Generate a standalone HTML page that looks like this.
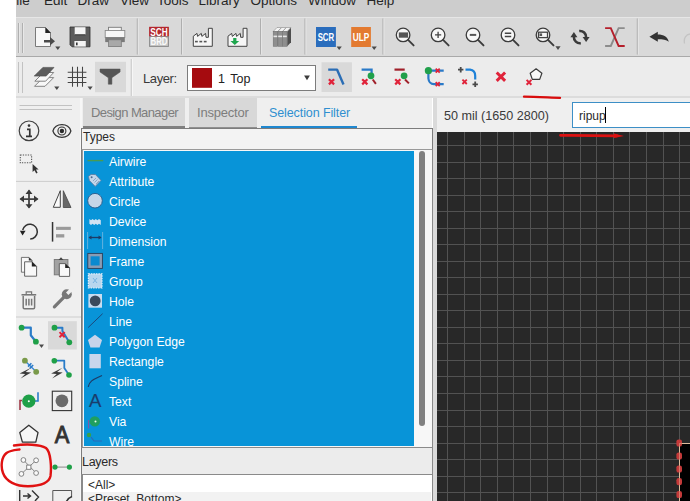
<!DOCTYPE html>
<html><head><meta charset="utf-8">
<style>
html,body{margin:0;padding:0;}
body{width:690px;height:501px;overflow:hidden;position:relative;background:#fff;font-family:"Liberation Sans",sans-serif;}
.a{position:absolute;}
.t{position:absolute;white-space:pre;line-height:1;}
svg{position:absolute;overflow:visible;}
</style></head><body>

<div class="a" style="left:16px;top:0;width:674px;height:17px;background:#cdcdcd;overflow:hidden">
<div class="t" style="left:-8px;top:-5.8px;font-size:13.5px;color:#262626">File</div>
<div class="t" style="left:28px;top:-5.8px;font-size:13.5px;color:#262626">Edit</div>
<div class="t" style="left:61.5px;top:-5.8px;font-size:13.5px;color:#262626">Draw</div>
<div class="t" style="left:104px;top:-5.8px;font-size:13.5px;color:#262626">View</div>
<div class="t" style="left:141px;top:-5.8px;font-size:13.5px;color:#262626">Tools</div>
<div class="t" style="left:182.5px;top:-5.8px;font-size:13.5px;color:#262626">Library</div>
<div class="t" style="left:234.5px;top:-5.8px;font-size:13.5px;color:#262626">Options</div>
<div class="t" style="left:292px;top:-5.8px;font-size:13.5px;color:#262626">Window</div>
<div class="t" style="left:350.5px;top:-5.8px;font-size:13.5px;color:#262626">Help</div>
</div>
<div class="a" style="left:16px;top:17px;width:674px;height:40px;background:#d9d9d9;border-top:1px solid #e6e6e6;box-sizing:border-box;border-bottom:1px solid #a9a9a9"></div>
<div class="a" style="left:16px;top:57px;width:674px;height:41px;background:#ececec;border-bottom:2px solid #dcdcdc;box-sizing:border-box"></div>
<div class="a" style="left:16px;top:98px;width:64px;height:403px;background:#efefef"></div>
<div class="a" style="left:80px;top:98px;width:2px;height:403px;background:#f7f7f7"></div>
<div class="a" style="left:82px;top:98px;width:350px;height:403px;background:#efefef"></div>
<div class="a" style="left:433px;top:98px;width:4px;height:403px;background:#dadada"></div>
<div class="a" style="left:437px;top:98px;width:253px;height:34px;background:#efefef"></div>
<div class="a" style="left:83px;top:98px;width:102px;height:28px;background:#d8d8d8"></div>
<div class="a" style="left:83px;top:126px;width:102px;height:2px;background:#808080"></div>
<div class="t" style="left:91px;top:106px;font-size:13px;color:#7d7d7d;letter-spacing:-0.6px">Design Manager</div>
<div class="a" style="left:189px;top:98px;width:68px;height:29px;background:#d8d8d8"></div>
<div class="a" style="left:189px;top:127px;width:68px;height:1px;background:#8f8f8f"></div>
<div class="t" style="left:197px;top:106px;font-size:13px;color:#7d7d7d;letter-spacing:-0.2px">Inspector</div>
<div class="t" style="left:269px;top:107px;font-size:12.5px;color:#2f8fd0;letter-spacing:-0.1px">Selection Filter</div>
<div class="a" style="left:261px;top:125.6px;width:96px;height:2.6px;background:#1f88d0"></div>
<div class="a" style="left:81px;top:128px;width:352px;height:22px;background:#f3f3f3;border:1px solid #7c7c7c;border-bottom-color:#999;box-sizing:border-box"></div>
<div class="t" style="left:83px;top:131px;font-size:12px;color:#2a2a2a">Types</div>
<div class="a" style="left:81px;top:150px;width:352px;height:298px;background:#f7f7f7;border-left:1px solid #7c7c7c;border-right:1px solid #8a8a8a;box-sizing:border-box"></div>
<div class="a" style="left:82px;top:150px;width:1px;height:297px;background:#9c9c9c"></div><div class="a" style="left:83px;top:150px;width:1px;height:297px;background:#eef6fc"></div>
<div class="a" style="left:84px;top:151px;width:330px;height:295px;background:#0894d8"></div>
<div class="a" style="left:419px;top:151px;width:6px;height:275px;background:#808080;border-radius:3px"></div>
<div class="a" style="left:81px;top:447px;width:352px;height:1px;background:#8a8a8a"></div>
<div class="a" style="left:84px;top:151px;width:330px;height:295px;overflow:hidden">
<div class="t" style="left:25px;top:4.800000000000001px;font-size:12.2px;color:#fff">Airwire</div>
<div class="t" style="left:25px;top:24.8px;font-size:12.2px;color:#fff">Attribute</div>
<div class="t" style="left:25px;top:44.8px;font-size:12.2px;color:#fff">Circle</div>
<div class="t" style="left:25px;top:64.8px;font-size:12.2px;color:#fff">Device</div>
<div class="t" style="left:25px;top:84.8px;font-size:12.2px;color:#fff">Dimension</div>
<div class="t" style="left:25px;top:104.8px;font-size:12.2px;color:#fff">Frame</div>
<div class="t" style="left:25px;top:124.8px;font-size:12.2px;color:#fff">Group</div>
<div class="t" style="left:25px;top:144.8px;font-size:12.2px;color:#fff">Hole</div>
<div class="t" style="left:25px;top:164.8px;font-size:12.2px;color:#fff">Line</div>
<div class="t" style="left:25px;top:184.8px;font-size:12.2px;color:#fff">Polygon Edge</div>
<div class="t" style="left:25px;top:204.8px;font-size:12.2px;color:#fff">Rectangle</div>
<div class="t" style="left:25px;top:224.8px;font-size:12.2px;color:#fff">Spline</div>
<div class="t" style="left:25px;top:244.8px;font-size:12.2px;color:#fff">Text</div>
<div class="t" style="left:25px;top:264.8px;font-size:12.2px;color:#fff">Via</div>
<div class="t" style="left:25px;top:284.8px;font-size:12.2px;color:#fff">Wire</div>
</div>
<div class="a" style="left:81px;top:448px;width:352px;height:26px;background:#ececec;border-left:1px solid #7c7c7c;border-right:1px solid #8a8a8a;box-sizing:border-box"></div>
<div class="t" style="left:82px;top:456px;font-size:12.5px;color:#2a2a2a;letter-spacing:-0.3px">Layers</div>
<div class="a" style="left:81px;top:474px;width:352px;height:1px;background:#8a8a8a"></div>
<div class="a" style="left:81px;top:475px;width:352px;height:26px;background:#fff;border-left:2px solid #8a8a8a;border-right:1px solid #8a8a8a;box-sizing:border-box"></div>
<div class="t" style="left:88px;top:479px;font-size:12px;color:#2a2a2a">&lt;All&gt;</div>
<div class="a" style="left:83px;top:492px;width:348px;height:9px;background:#f2f2f2"></div>
<div class="t" style="left:88px;top:493px;font-size:12px;color:#2a2a2a">&lt;Preset_Bottom&gt;</div>
<div class="t" style="left:444px;top:110px;font-size:12.6px;color:#3a3a3a">50 mil (1650 2800)</div>
<div class="a" style="left:572px;top:102px;width:130px;height:26px;background:#fff;border:1px solid #3d8fc6;box-sizing:border-box"></div>
<div class="t" style="left:579px;top:110px;font-size:12px;color:#2a2a2a">ripup</div>
<div class="a" style="left:605px;top:107px;width:1px;height:16px;background:#000"></div>
<div class="a" style="left:437px;top:132px;width:253px;height:369px;background:#282828;overflow:hidden">
<svg width="253" height="369" style="left:0;top:0"><line x1="10.5" y1="0" x2="10.5" y2="369" stroke="#525252" stroke-width="1"/><line x1="27.5" y1="0" x2="27.5" y2="369" stroke="#525252" stroke-width="1"/><line x1="43.5" y1="0" x2="43.5" y2="369" stroke="#525252" stroke-width="1"/><line x1="60.5" y1="0" x2="60.5" y2="369" stroke="#525252" stroke-width="1"/><line x1="76.5" y1="0" x2="76.5" y2="369" stroke="#525252" stroke-width="1"/><line x1="93.5" y1="0" x2="93.5" y2="369" stroke="#525252" stroke-width="1"/><line x1="110.5" y1="0" x2="110.5" y2="369" stroke="#525252" stroke-width="1"/><line x1="126.5" y1="0" x2="126.5" y2="369" stroke="#525252" stroke-width="1"/><line x1="143.5" y1="0" x2="143.5" y2="369" stroke="#525252" stroke-width="1"/><line x1="159.5" y1="0" x2="159.5" y2="369" stroke="#525252" stroke-width="1"/><line x1="176.5" y1="0" x2="176.5" y2="369" stroke="#525252" stroke-width="1"/><line x1="192.5" y1="0" x2="192.5" y2="369" stroke="#525252" stroke-width="1"/><line x1="209.5" y1="0" x2="209.5" y2="369" stroke="#525252" stroke-width="1"/><line x1="226.5" y1="0" x2="226.5" y2="369" stroke="#525252" stroke-width="1"/><line x1="242.5" y1="0" x2="242.5" y2="369" stroke="#525252" stroke-width="1"/><line x1="0" y1="13.5" x2="253" y2="13.5" stroke="#525252" stroke-width="1"/><line x1="0" y1="30.5" x2="253" y2="30.5" stroke="#525252" stroke-width="1"/><line x1="0" y1="46.5" x2="253" y2="46.5" stroke="#525252" stroke-width="1"/><line x1="0" y1="63.5" x2="253" y2="63.5" stroke="#525252" stroke-width="1"/><line x1="0" y1="79.5" x2="253" y2="79.5" stroke="#525252" stroke-width="1"/><line x1="0" y1="96.5" x2="253" y2="96.5" stroke="#525252" stroke-width="1"/><line x1="0" y1="112.5" x2="253" y2="112.5" stroke="#525252" stroke-width="1"/><line x1="0" y1="129.5" x2="253" y2="129.5" stroke="#525252" stroke-width="1"/><line x1="0" y1="145.5" x2="253" y2="145.5" stroke="#525252" stroke-width="1"/><line x1="0" y1="162.5" x2="253" y2="162.5" stroke="#525252" stroke-width="1"/><line x1="0" y1="178.5" x2="253" y2="178.5" stroke="#525252" stroke-width="1"/><line x1="0" y1="195.5" x2="253" y2="195.5" stroke="#525252" stroke-width="1"/><line x1="0" y1="211.5" x2="253" y2="211.5" stroke="#525252" stroke-width="1"/><line x1="0" y1="228.5" x2="253" y2="228.5" stroke="#525252" stroke-width="1"/><line x1="0" y1="244.5" x2="253" y2="244.5" stroke="#525252" stroke-width="1"/><line x1="0" y1="261.5" x2="253" y2="261.5" stroke="#525252" stroke-width="1"/><line x1="0" y1="278.5" x2="253" y2="278.5" stroke="#525252" stroke-width="1"/><line x1="0" y1="294.5" x2="253" y2="294.5" stroke="#525252" stroke-width="1"/><line x1="0" y1="311.5" x2="253" y2="311.5" stroke="#525252" stroke-width="1"/><line x1="0" y1="327.5" x2="253" y2="327.5" stroke="#525252" stroke-width="1"/><line x1="0" y1="344.5" x2="253" y2="344.5" stroke="#525252" stroke-width="1"/><line x1="0" y1="360.5" x2="253" y2="360.5" stroke="#525252" stroke-width="1"/><rect x="242" y="311" width="11" height="58" fill="#000"/><path d="M242.5,369 V311.5 H253" fill="none" stroke="#d8b898" stroke-width="1"/><rect x="239.4" y="307.4" width="5.6" height="7.2" rx="2.2" fill="#c43a3a"/><rect x="239.4" y="320.4" width="5.6" height="7.2" rx="2.2" fill="#c43a3a"/><rect x="239.4" y="333.4" width="5.6" height="7.2" rx="2.2" fill="#c43a3a"/><rect x="239.4" y="346.09999999999997" width="5.6" height="7.2" rx="2.2" fill="#c43a3a"/><rect x="239.4" y="358.9" width="5.6" height="7.2" rx="2.2" fill="#c43a3a"/><path d="M242.5,369 V311.5 H253" fill="none" stroke="#e8c0a0" stroke-width="0.6" opacity="0.8"/></svg>
</div>
<svg width="690" height="501" style="left:0;top:0"><rect x="18" y="23" width="1" height="30" fill="#b0b0b0"/><rect x="22" y="23" width="1" height="30" fill="#b0b0b0"/><rect x="19" y="23" width="1" height="30" fill="#e8e8e8"/><rect x="23" y="23" width="1" height="30" fill="#e8e8e8"/><rect x="18" y="62" width="1" height="31" fill="#c2c2c2"/><rect x="22" y="62" width="1" height="31" fill="#c2c2c2"/><rect x="136.8" y="18.5" width="1" height="36" fill="#a9a9a9"/><rect x="137.8" y="18.5" width="1" height="36" fill="#e6e6e6"/><rect x="181.1" y="18.5" width="1" height="36" fill="#a9a9a9"/><rect x="182.1" y="18.5" width="1" height="36" fill="#e6e6e6"/><rect x="260.1" y="18.5" width="1" height="36" fill="#a9a9a9"/><rect x="261.1" y="18.5" width="1" height="36" fill="#e6e6e6"/><rect x="304.5" y="18.5" width="1" height="36" fill="#a9a9a9"/><rect x="305.5" y="18.5" width="1" height="36" fill="#e6e6e6"/><rect x="382.5" y="18.5" width="1" height="36" fill="#a9a9a9"/><rect x="383.5" y="18.5" width="1" height="36" fill="#e6e6e6"/><rect x="636.8" y="18.5" width="1" height="36" fill="#a9a9a9"/><rect x="637.8" y="18.5" width="1" height="36" fill="#e6e6e6"/><rect x="130.8" y="59" width="1" height="37" fill="#bdbdbd"/><rect x="131.8" y="59" width="1" height="37" fill="#f8f8f8"/><path d="M35.5,27.5 H45.5 L50.5,33 V46.5 H35.5 Z" fill="#f7f7f7" stroke="#7a7a7a" stroke-width="1"/><path d="M45.3,27.2 V33 H51 Z" fill="#222"/><path d="M44,40 H50 V37 L55,41.2 L50,45.4 V42.4 H44 Z" fill="#4a4a4a"/><path d="M55.199999999999996,46.5 L60.4,46.5 L57.8,50.1 Z" fill="#4a4a4a"/><path d="M70,27 H90 V46.8 H72 L70,44.8 Z" fill="#5c5c5c" stroke="#2e2e2e" stroke-width="0.8"/><rect x="74.7" y="27.2" width="10.8" height="7.6" fill="#f4f4f4"/><rect x="74.7" y="34.3" width="10.8" height="1" fill="#333"/><rect x="74.4" y="41" width="11.4" height="5.6" fill="#f4f4f4"/><rect x="76" y="42.5" width="1.6" height="2.8" fill="#333"/><rect x="108.5" y="27.3" width="12.8" height="7.5" fill="#f6f6f6" stroke="#7a7a7a" stroke-width="0.9"/><rect x="105.2" y="30.5" width="19.6" height="7" fill="#f6f6f6" stroke="#8a8a8a" stroke-width="0.9"/><rect x="105.2" y="37.3" width="19.6" height="4.8" fill="#7a7a7a"/><rect x="108.6" y="39.8" width="12.7" height="6.8" fill="#a8a8a8" stroke="#7a7a7a" stroke-width="0.8"/><rect x="149.1" y="26.8" width="19.8" height="10" fill="#b3272d"/><rect x="149.6" y="36.8" width="18.8" height="9.6" fill="#c9c9c9" stroke="#8a8a8a" stroke-width="1"/><text x="159" y="35.9" font-family="Liberation Sans" font-weight="bold" font-size="11" fill="#fff" text-anchor="middle" textLength="17.5" lengthAdjust="spacingAndGlyphs">SCH</text><text x="159" y="45.4" font-family="Liberation Sans" font-weight="bold" font-size="11" fill="#fafafa" text-anchor="middle" textLength="17" lengthAdjust="spacingAndGlyphs">BRD</text><g transform="translate(0,0)"><path d="M193.3,46.3 V36.2 L197,33.4 L197.6,36.4 L201.3,33.4 L201.9,36.4 L205.6,33.4 L206,37.3 H208.4 V28.3 H212.3 V46.3 Z" fill="#f6f6f6" stroke="#3a3a3a" stroke-width="0.95" stroke-linejoin="round"/><rect x="195" y="40.8" width="2.8" height="1.6" fill="#555"/><rect x="199.4" y="40.8" width="2.8" height="1.6" fill="#555"/><rect x="203.8" y="40.8" width="2.8" height="1.6" fill="#555"/></g><g transform="translate(34.7,0)"><path d="M193.3,46.3 V36.2 L197,33.4 L197.6,36.4 L201.3,33.4 L201.9,36.4 L205.6,33.4 L206,37.3 H208.4 V28.3 H212.3 V46.3 Z" fill="#f6f6f6" stroke="#3a3a3a" stroke-width="0.95" stroke-linejoin="round"/></g><path d="M233.2,38 H236.4 V41 H239.2 L234.8,45 L230.4,41 H233.2 Z" fill="#1ea64e"/><path d="M287.2,31.5 L291,27.5 V42.3 L287.2,46.3 Z" fill="#4e4e4e"/><path d="M273.2,31.5 L277.0,27.5 H281.5 L277.7,31.5 Z" fill="#f4f4f4" stroke="#7a7a7a" stroke-width="0.5"/><rect x="273.2" y="31.5" width="4.5" height="14.8" fill="#8e8e8e" stroke="#6a6a6a" stroke-width="0.5"/><rect x="273.5" y="35.6" width="3.9" height="1.6" fill="#e6e6e6"/><path d="M277.9,31.5 L281.7,27.5 H286.2 L282.4,31.5 Z" fill="#f4f4f4" stroke="#7a7a7a" stroke-width="0.5"/><rect x="277.9" y="31.5" width="4.5" height="14.8" fill="#8e8e8e" stroke="#6a6a6a" stroke-width="0.5"/><rect x="278.2" y="35.6" width="3.9" height="1.6" fill="#e6e6e6"/><path d="M282.59999999999997,31.5 L286.4,27.5 H290.9 L287.09999999999997,31.5 Z" fill="#f4f4f4" stroke="#7a7a7a" stroke-width="0.5"/><rect x="282.59999999999997" y="31.5" width="4.5" height="14.8" fill="#8e8e8e" stroke="#6a6a6a" stroke-width="0.5"/><rect x="282.9" y="35.6" width="3.9" height="1.6" fill="#e6e6e6"/><rect x="316" y="27" width="19.9" height="20" fill="#2a6dbd"/><text x="325.9" y="41" font-family="Liberation Sans" font-weight="bold" font-size="11.5" fill="#fff" text-anchor="middle" textLength="16.5" lengthAdjust="spacingAndGlyphs">SCR</text><path d="M336.59999999999997,46.4 L341.8,46.4 L339.2,50.0 Z" fill="#4a4a4a"/><rect x="351.2" y="27" width="19.7" height="20" fill="#e37a30"/><text x="361" y="41" font-family="Liberation Sans" font-weight="bold" font-size="11.5" fill="#fff" text-anchor="middle" textLength="16.5" lengthAdjust="spacingAndGlyphs">ULP</text><path d="M371.59999999999997,46.4 L376.8,46.4 L374.2,50.0 Z" fill="#4a4a4a"/><circle cx="403.1" cy="34.9" r="6.8" fill="#f7f7f7" stroke="#3c3c3c" stroke-width="1.3"/><path d="M408.1,39.9 L413.6,45.4" stroke="#3c3c3c" stroke-width="1.9" stroke-linecap="round"/><rect x="398.8" y="32.4" width="9.3" height="5.3" fill="#555"/><circle cx="438.1" cy="34.9" r="6.8" fill="#f7f7f7" stroke="#3c3c3c" stroke-width="1.3"/><path d="M443.1,39.9 L448.6,45.4" stroke="#3c3c3c" stroke-width="1.9" stroke-linecap="round"/><path d="M435,34.9 H441.2 M438.1,31.8 V38" stroke="#444" stroke-width="1.3"/><circle cx="473" cy="34.9" r="6.8" fill="#f7f7f7" stroke="#3c3c3c" stroke-width="1.3"/><path d="M478,39.9 L483.5,45.4" stroke="#3c3c3c" stroke-width="1.9" stroke-linecap="round"/><path d="M469.8,34.9 H476.2" stroke="#555" stroke-width="2"/><circle cx="508" cy="34.9" r="6.8" fill="#f7f7f7" stroke="#3c3c3c" stroke-width="1.3"/><path d="M513,39.9 L518.5,45.4" stroke="#3c3c3c" stroke-width="1.9" stroke-linecap="round"/><path d="M504.8,33.3 H511.2 M504.8,36.5 H511.2" stroke="#444" stroke-width="1.4"/><circle cx="543" cy="34.9" r="6.8" fill="#f7f7f7" stroke="#3c3c3c" stroke-width="1.3"/><path d="M548,39.9 L553.5,45.4" stroke="#3c3c3c" stroke-width="1.9" stroke-linecap="round"/><rect x="538.5" y="32.2" width="9" height="5.4" fill="none" stroke="#444" stroke-width="1.3"/><rect x="539.5" y="33.4" width="2.6" height="2.6" fill="#555"/><path d="M555.4,46.3 L560.6,46.3 L558,49.9 Z" fill="#4a4a4a"/><path d="M579.2,31 A6.1,6.1 0 0 1 586.1,37.4" fill="none" stroke="#3a3a3a" stroke-width="2.6"/><path d="M582.6,37 H589.6 L586.1,41.9 Z" fill="#3a3a3a"/><path d="M580.8,43.2 A6.1,6.1 0 0 1 573.9,36.8" fill="none" stroke="#3a3a3a" stroke-width="2.6"/><path d="M570.4,37.2 H577.4 L573.9,32.1 Z" fill="#3a3a3a"/><path d="M605.1,46 H610.8 L618.6,28.1 H624.7" fill="none" stroke="#8c8c8c" stroke-width="1.9"/><path d="M605.1,28.1 H610.8 L618.6,46 H624.7" fill="none" stroke="#b51f2b" stroke-width="1.9"/><path d="M649.4,36.8 L657.8,31.8 V34.6 C663.8,34.6 667.6,37 668.8,41.8 C666.4,39.8 662.6,39.2 657.8,39.2 V41.8 Z" fill="#333"/><path d="M684.5,43.5 C683.5,38 686,34.5 690,34" fill="none" stroke="#c4c4c4" stroke-width="1.3"/><path d="M34.5,86.3 L43.2,77.6 H53.7 L45,86.3 Z" fill="#f8f8f8" stroke="#777" stroke-width="0.9"/><path d="M34.8,81.2 L43.5,72.5 H53.7 L45.6,81.2 Z" fill="#f8f8f8" stroke="#777" stroke-width="0.9"/><path d="M34.2,76.1 L42.9,67.4 H54 L46.2,76.1 Z" fill="#5c5c5c" stroke="#4a4a4a" stroke-width="0.6"/><path d="M54.199999999999996,86.4 L59.4,86.4 L56.8,90.0 Z" fill="#4a4a4a"/><path d="M72.5,66.7 V86.8 M77.5,66.7 V86.8 M82.5,66.7 V86.8 M67.7,72.2 H86.4 M67.7,77.4 H86.4 M67.7,82.5 H86.4" stroke="#444" stroke-width="1.05"/><path d="M87.5,86.4 L92.69999999999999,86.4 L90.1,90.0 Z" fill="#4a4a4a"/><rect x="95" y="61.8" width="31" height="30.4" fill="#d9d9d9"/><path d="M100,69 H120.1 V72 L111.9,77.7 V84.2 H108.3 V77.7 L100,72 Z" fill="#555" stroke="#555" stroke-width="0.5" stroke-linejoin="round"/><rect x="187.5" y="65.5" width="128" height="25" fill="#fff" stroke="#7c7c7c" stroke-width="1"/><rect x="192" y="68" width="20" height="19.8" fill="#a50b0f"/><path d="M304.1,75.6 H309.9 L307,80.2 Z" fill="#3c3c3c"/><rect x="321.5" y="62.3" width="30.4" height="29.7" fill="#d9d9d9"/><path d="M328.2,69.6 H337 L343.5,84.6" fill="none" stroke="#2a6db5" stroke-width="2.4" stroke-linejoin="round"/><path d="M328.9,79.2 L334.1,84.39999999999999 M334.1,79.2 L328.9,84.39999999999999" stroke="#e0233a" stroke-width="2.2"/><path d="M361.6,69.6 H371.6 V73" fill="none" stroke="#2a7ac8" stroke-width="2.2"/><path d="M372.7,79.5 L375.9,83.8" stroke="#a0202a" stroke-width="2"/><circle cx="371" cy="75.8" r="3.4" fill="#21a04b"/><path d="M362.2,79.2 L367.40000000000003,84.39999999999999 M367.40000000000003,79.2 L362.2,84.39999999999999" stroke="#e0233a" stroke-width="2.2"/><path d="M394.5,69.6 H404.7" stroke="#a0202a" stroke-width="2.2"/><path d="M405,79.5 L408.9,83.4" stroke="#a0202a" stroke-width="2"/><circle cx="404.1" cy="75.8" r="3.4" fill="#21a04b"/><path d="M395.2,79.2 L400.40000000000003,84.39999999999999 M400.40000000000003,79.2 L395.2,84.39999999999999" stroke="#e0233a" stroke-width="2.2"/><path d="M431,70.7 H443.7 M428.4,74 V78.5 Q429,84.1 434,84.1 H443.7" fill="none" stroke="#2a7ac8" stroke-width="2.2"/><circle cx="428.4" cy="70.7" r="3.6" fill="#21a04b"/><path d="M435.7,68.7 L439.7,72.7 M439.7,68.7 L435.7,72.7" stroke="#e0233a" stroke-width="1.8"/><path d="M435.7,82.1 L439.7,86.1 M439.7,82.1 L435.7,86.1" stroke="#e0233a" stroke-width="1.8"/><path d="M465.5,69.7 H470 Q475.2,70.2 475.2,76 V79.5" fill="none" stroke="#1f82d8" stroke-width="2.2"/><path d="M458,69.7 H463.4 M460.7,67 V72.4 M472.5,84.3 H477.9 M475.2,81.6 V87" stroke="#4a4a4a" stroke-width="1.8"/><path d="M462.40000000000003,79.6 L466.8,84.0 M466.8,79.6 L462.40000000000003,84.0" stroke="#e0233a" stroke-width="1.8"/><path d="M496.7,72.5 L505.09999999999997,80.9 M505.09999999999997,72.5 L496.7,80.9" stroke="#e0233a" stroke-width="3"/><path d="M536.1,68.8 L541.9,73.3 L539.7,79.4 H532.3 L530.2,73.3 Z" fill="#f8f8f8" stroke="#3c3c3c" stroke-width="1.2" stroke-linejoin="round"/><path d="M526.6,79.89999999999999 L531.4,84.7 M531.4,79.89999999999999 L526.6,84.7" stroke="#e0233a" stroke-width="2"/><path d="M524,96.7 C535,96.9 548,97.5 560,97.9" fill="none" stroke="#d80c0c" stroke-width="2.3" stroke-linecap="round"/><path d="M560.5,135.3 C580,135.4 600,135.6 617,135.8" fill="none" stroke="#dc1010" stroke-width="2.8" stroke-linecap="round"/><path d="M614,133.5 L624,135.9 L614,138.1 Z" fill="#dc1010"/><rect x="19.5" y="105" width="52.5" height="1" fill="#c2c2c2"/><rect x="19.5" y="109" width="52.5" height="1" fill="#c2c2c2"/><rect x="16" y="180.9" width="65" height="1" fill="#cdcdcd"/><rect x="16" y="248.9" width="65" height="1" fill="#cdcdcd"/><rect x="16" y="316.5" width="65" height="1" fill="#cdcdcd"/><circle cx="29" cy="130.8" r="9.8" fill="none" stroke="#404040" stroke-width="1.2"/><circle cx="29" cy="125.6" r="1.3" fill="#333"/><path d="M27,129.3 H29.8 V136 M26,136.4 H32" fill="none" stroke="#333" stroke-width="1.7"/><path d="M52.9,131 C55.5,122.6 68.3,122.6 70.9,131 C68.3,139.4 55.5,139.4 52.9,131 Z" fill="none" stroke="#333" stroke-width="1.2"/><circle cx="61.9" cy="131" r="4" fill="none" stroke="#333" stroke-width="1.1"/><circle cx="61.9" cy="131" r="2.2" fill="#2a2a2a"/><rect x="20.3" y="155" width="11.3" height="7.8" fill="none" stroke="#555" stroke-width="1.1" stroke-dasharray="1.3,1.2"/><path d="M32.6,164 L32.6,172 L34.5,170.3 L36.2,173.5 L37.6,172.8 L36,169.6 L38.6,169.4 Z" fill="#333"/><path d="M20.5,199.1 H37.5 M29,190.5 V207.5" stroke="#444" stroke-width="1.8"/><path d="M19.5,199.1 L24,195.6 V202.6 Z M38.5,199.1 L34,195.6 V202.6 Z M29,189.6 L25.5,194 H32.5 Z M29,208.6 L25.5,204.2 H32.5 Z" fill="#3a3a3a"/><path d="M60.3,190.7 L53.3,207.3 H60.3 Z" fill="#fafafa" stroke="#444" stroke-width="1"/><path d="M63.3,190.7 L71,207.5 H63.3 Z" fill="#686868" stroke="#444" stroke-width="0.8"/><path d="M22.7,230 A7.4,7.4 0 1 1 30.2,239" fill="none" stroke="#333" stroke-width="1.5"/><path d="M19.9,230.7 H25.6 L22.5,235.6 Z" fill="#222"/><rect x="51.8" y="222" width="1.5" height="19.6" fill="#333"/><rect x="56" y="226.8" width="14.8" height="3.1" fill="#9a9a9a"/><rect x="56" y="234.2" width="8.3" height="3.3" fill="#9a9a9a"/><path d="M21.4,257.4 H29 L32,260.4 V272.2 H21.4 Z" fill="#f8f8f8" stroke="#666" stroke-width="0.9"/><path d="M28.8,257.2 V260.6 H32.2 Z" fill="#333"/><path d="M24.6,261.8 H32 L36.6,266.4 V276.2 H24.6 Z" fill="#f8f8f8" stroke="#555" stroke-width="0.9"/><path d="M31.8,261.6 V266.6 H36.8 Z" fill="#222"/><rect x="54.3" y="259.5" width="13.6" height="15.3" fill="#a2a2a2" stroke="#7a7a7a" stroke-width="1"/><path d="M58.5,260 L61,257.2 L63.5,260 Z" fill="#444"/><path d="M59.3,263.6 H65.4 L69.6,267.8 V276.4 H59.3 Z" fill="#f8f8f8" stroke="#555" stroke-width="0.9"/><path d="M65.2,263.4 V268 H69.8 Z" fill="#222"/><path d="M21.5,294.8 H36.2" stroke="#777" stroke-width="1.6"/><path d="M26.2,294 V291.8 H31.6 V294" fill="none" stroke="#777" stroke-width="1.2"/><path d="M23.2,296 V307.6 Q23.2,308.8 24.4,308.8 H33.4 Q34.6,308.8 34.6,307.6 V296" fill="none" stroke="#777" stroke-width="1.5"/><path d="M26.2,298.8 V305.5 M28.9,298.8 V305.5 M31.6,298.8 V305.5" stroke="#777" stroke-width="1.5"/><path d="M54.4,306.8 L64,297.2" stroke="#777" stroke-width="3.3" stroke-linecap="round"/><circle cx="66.8" cy="294.2" r="5" fill="#777"/><path d="M67.2,293.8 L73,288" stroke="#efefef" stroke-width="3.4"/><path d="M21.6,327.7 H30.8 V335.2 L35.9,341.7" fill="none" stroke="#2a7cc8" stroke-width="2.2" stroke-linejoin="round"/><circle cx="21.6" cy="327.7" r="2.9" fill="#1fa048"/><circle cx="35.9" cy="341.7" r="2.9" fill="#1fa048"/><path d="M39,344.4 H44 L41.5,348.1 Z" fill="#4a4a4a"/><rect x="48" y="321.2" width="28.8" height="28.3" fill="#d9d9d9"/><path d="M54.5,327.7 H62.4 V331 L69.3,342.3" fill="none" stroke="#2a7cc8" stroke-width="2" stroke-linejoin="round"/><circle cx="54.5" cy="327.7" r="2.9" fill="#1fa048"/><circle cx="69.3" cy="342.3" r="2.9" fill="#1fa048"/><path d="M59.5,332.09999999999997 L64.7,337.3 M64.7,332.09999999999997 L59.5,337.3" stroke="#e0233a" stroke-width="2"/><path d="M24.9,360.7 L36.2,371.8" stroke="#3a8ad8" stroke-width="1.4"/><path d="M28,366.6 L31.4,363.2 M29.8,368.4 L33.2,365" stroke="#2a7ac8" stroke-width="1.5"/><circle cx="24.9" cy="360.7" r="2.9" fill="#7a9a4a"/><circle cx="36.2" cy="371.8" r="2.9" fill="#7a9a4a"/><path d="M31,367.8 L19.6,373.6 L25.2,373.9 L20.6,378.6 L31.2,372.4 L25.6,372 Z" fill="#3a3a3a"/><path d="M54.3,360.7 H64.3 V368 L69,375" fill="none" stroke="#2a7cc8" stroke-width="1.8" stroke-linejoin="round"/><circle cx="54.3" cy="360.7" r="2.8" fill="#1fa048"/><circle cx="69" cy="375" r="2.8" fill="#1fa048"/><path d="M62.5,367.8 L51.1,373.6 L56.7,373.9 L52.1,378.6 L62.7,372.4 L57.1,372 Z" fill="#3a3a3a"/><path d="M20,410 V400.5 H22" fill="none" stroke="#a03a48" stroke-width="1.6"/><path d="M38,392.2 V401 H35" fill="none" stroke="#2a7cc8" stroke-width="1.6"/><circle cx="28.8" cy="401.2" r="6.6" fill="#1fa048"/><circle cx="28.8" cy="401.2" r="1" fill="#fff"/><rect x="52.3" y="391.2" width="19.4" height="19.4" fill="none" stroke="#333" stroke-width="1.1"/><circle cx="61.9" cy="400.8" r="6.4" fill="#6a6a6a"/><path d="M28.8,425.2 L38,432.6 L35.8,442.2 H22.4 L19.8,432.6 Z" fill="#f6f6f6" stroke="#333" stroke-width="1.3" stroke-linejoin="round"/><text x="62" y="442.6" font-family="Liberation Sans" font-size="23" fill="#333" stroke="#333" stroke-width="0.9" text-anchor="middle" textLength="14.6" lengthAdjust="spacingAndGlyphs">A</text><path d="M23.4,460 L36.1,473 M36.1,460.3 L21.4,473.9" stroke="#888" stroke-width="1"/><rect x="26.7" y="465.1" width="4.2" height="4.2" fill="#fff" stroke="#777" stroke-width="0.9"/><circle cx="23.4" cy="460" r="2.4" fill="#fafafa" stroke="#777" stroke-width="0.9"/><circle cx="36.1" cy="460.3" r="2.4" fill="#fafafa" stroke="#777" stroke-width="0.9"/><circle cx="21.4" cy="473.9" r="2.4" fill="#fafafa" stroke="#777" stroke-width="0.9"/><circle cx="36.1" cy="473" r="2.4" fill="#fafafa" stroke="#777" stroke-width="0.9"/><path d="M55,467.1 H69.4" stroke="#999" stroke-width="1.2"/><circle cx="55" cy="467.1" r="2.6" fill="#1fa048"/><circle cx="69.4" cy="467.1" r="2.6" fill="#1fa048"/><path d="M19.7,490 V501 M23,496 H30 M27.5,493.5 L30.5,496 L27.5,498.5 M32,490.5 L38.5,497 L35,501" fill="none" stroke="#333" stroke-width="1.4"/><path d="M52.8,501 V490.5 H71.6 V497" fill="none" stroke="#555" stroke-width="1"/><path d="M66.5,501.5 Q68,498 72,496.5" fill="none" stroke="#333" stroke-width="1.6"/><path d="M14,445.5 C25,444 40,444 46,448 C51,452 51.5,468 50.5,476 C49,483 41,486 28,486.3 C16,486.3 6,481.5 3,473 C0.5,466 1.5,457 6.5,453 C10,450.3 15,450 19.5,449.5" fill="none" stroke="#e01212" stroke-width="2.4" stroke-linecap="round"/><clipPath id="lc"><rect x="84" y="151" width="330" height="295"/></clipPath><g clip-path="url(#lc)"><path d="M87.6,160.6 H103.2" stroke="#4a9a52" stroke-width="1.4"/><path d="M88.5,176.5 L91,174.4 L95.5,174.6 L101,180.4 L95.2,186.4 L89.4,180.6 Z" fill="#c4d6ea" stroke="#5a7aa0" stroke-width="0.8"/><circle cx="91.6" cy="177.2" r="1" fill="#4a6a90"/><path d="M93,181 L96,178 M94.5,182.5 L97.5,179.5 M96,184 L99,181" stroke="#6a88aa" stroke-width="0.6"/><circle cx="95" cy="200.7" r="7.3" fill="#c6d6e8" stroke="#2a5a8a" stroke-width="0.9"/><path d="M89.4,219 L91,220.2 L92.6,219 L94.2,220.2 L95.8,219 L97.4,220.2 L99,219 L100.8,220.2 V225 L99,223.8 L97.4,225 L95.8,223.8 L94.2,225 L92.6,223.8 L91,225 L89.4,223.8 Z" fill="#d2e2f2"/><path d="M87.6,232 V249 M102.6,232 V249" stroke="#7ab8e0" stroke-width="0.8"/><path d="M89,237.5 H101" stroke="#1e3a66" stroke-width="1.3"/><path d="M88.5,237.5 L91.5,235.5 V239.5 Z M101.5,237.5 L98.5,235.5 V239.5 Z" fill="#1e3a66"/><rect x="87.8" y="253.4" width="14.6" height="15" fill="#8a9cb4" stroke="#2a3e5a" stroke-width="0.9"/><rect x="90.6" y="256.3" width="9" height="9.2" fill="#0a8ad0"/><rect x="88.4" y="273.8" width="13.6" height="14" fill="#b8d6ee" stroke="#e4f0fa" stroke-width="1.2" stroke-dasharray="1.5,1"/><path d="M93,278 L97,283 M97,278 L93,283" stroke="#7ab4e0" stroke-width="1"/><rect x="88.4" y="294" width="13.6" height="13.7" fill="#c8dcf0"/><circle cx="95.2" cy="300.9" r="5.4" fill="#3a4a5c"/><path d="M88.2,327.5 L102.6,313.7" stroke="#1e3f70" stroke-width="0.9"/><path d="M95,334.8 L102,340 L99.6,347.4 H90.4 L88,340 Z" fill="#c8d4ea"/><rect x="89.4" y="354" width="11.4" height="14.3" fill="#c8d6ec"/><path d="M88.2,386.9 C89.5,380 95,379 102,375.5" fill="none" stroke="#1e3a66" stroke-width="1.2"/><text x="95.1" y="407.4" font-family="Liberation Sans" font-size="18" fill="#1a3d6c" stroke="#1a3d6c" stroke-width="0.15" text-anchor="middle" textLength="12.4" lengthAdjust="spacingAndGlyphs">A</text><path d="M88.6,420 V428.5" stroke="#7a5aa8" stroke-width="1.2"/><circle cx="94.8" cy="421.4" r="5.2" fill="#22a052" opacity="0.9"/><circle cx="95.5" cy="421.4" r="1" fill="#e8ffe8"/><circle cx="89" cy="435" r="2.2" fill="#3aa048"/><path d="M91,437 L94,441 H102" fill="none" stroke="#2a6ab8" stroke-width="1.2"/></g></svg>
<div class="t" style="left:143px;top:72px;font-size:13px;color:#3a3a3a;letter-spacing:-0.4px">Layer:</div>
<div class="t" style="left:218px;top:73px;font-size:12.5px;color:#222;word-spacing:2px">1 Top</div>
</body></html>
